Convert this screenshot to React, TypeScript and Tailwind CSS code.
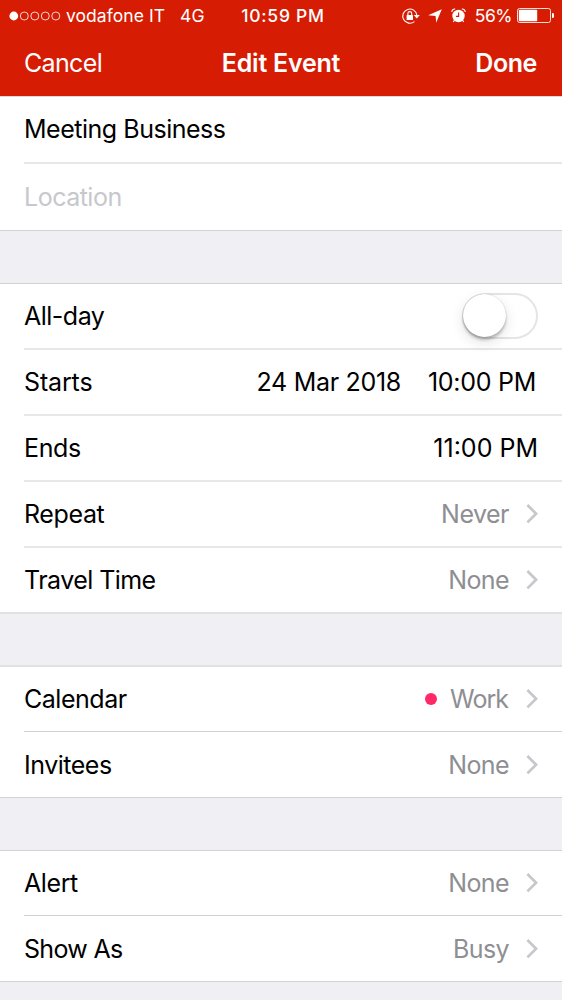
import type { ReactNode } from "react";

function Chevron() {
  return (
    <svg className="ml-[17px] h-5 w-3 shrink-0" viewBox="0 0 12 20" fill="none" stroke="#c7c7cc" strokeWidth="2.7">
      <path d="M1.4 1 10.1 9.7 1.4 18.4" />
    </svg>
  );
}

function Row({
  label,
  labelClass,
  height = "h-[66px]",
  line = "border-b-2 border-[#e7e7e9]",
  children,
}: {
  label: string;
  labelClass: string;
  height?: string;
  line?: string;
  children?: ReactNode;
}) {
  return (
    <div className={`flex pl-6 ${height}`}>
      <div className={`flex flex-1 items-center justify-between pr-6 ${line}`}>
        <span className={labelClass}>{label}</span>
        <div className="flex items-center">{children}</div>
      </div>
    </div>
  );
}

function StatusBar() {
  return (
    <div className="grid h-[31px] grid-cols-[1fr_auto_1fr] items-center text-[17.5px] leading-none">
      <div className="flex items-center pl-[9px]">
        <svg className="h-[10px] w-[52px]" viewBox="0 0 52 10" fill="none" stroke="#fff" strokeWidth="0.8">
          <circle cx="4.8" cy="5" r="4.4" fill="#fff" stroke="none" />
          <circle cx="15.3" cy="5" r="4" />
          <circle cx="25.8" cy="5" r="4" />
          <circle cx="36.3" cy="5" r="4" />
          <circle cx="46.8" cy="5" r="4" />
        </svg>
        <span className="ml-[5px] tracking-[0.05px]">vodafone IT</span>
        <span className="ml-[15px] tracking-[0.2px]">4G</span>
      </div>
      <span className="pl-1 font-medium tracking-[0.75px]">10:59 PM</span>
      <div className="flex items-center justify-end pr-2">
        <svg className="h-[18px] w-[20px]" viewBox="0 0 20 18" fill="none">
          <path d="M15.9 8.2A7.1 7.1 0 1 0 13.4 14.6" stroke="#fff" strokeWidth="1.1" />
          <path d="M12.8 8h6l-3 3.6z" fill="#fff" />
          <rect x="5.6" y="8" width="6.4" height="5.1" rx="0.5" fill="#fff" />
          <path d="M6.9 8V6.5a1.9 1.9 0 0 1 3.8 0V8" stroke="#fff" strokeWidth="1.1" />
        </svg>
        <svg className="ml-[7px] h-[14px] w-[14px]" viewBox="0 0 14 14" fill="#fff">
          <path d="M13.8.2 8.2 13.8 7.6 6.9.2 6.3z" />
        </svg>
        <svg className="ml-[9px] h-[15px] w-[15px]" viewBox="0 0 15 15" fill="none">
          <circle cx="7.5" cy="8" r="6.2" fill="#fff" />
          <path d="M.8 4A3 3 0 0 1 4.2 1M14.2 4A3 3 0 0 0 10.8 1" stroke="#fff" strokeWidth="1.1" />
          <path d="m3.6 12-1.3 1.8M11.4 12l1.3 1.8" stroke="#fff" strokeWidth="1.2" />
          <path d="M7.6 4.4v4H4.9" stroke="#d61d04" strokeWidth="1.1" />
        </svg>
        <span className="ml-[9px] tracking-[-0.5px]">56%</span>
        <svg className="ml-[5px] h-[15px] w-[37px]" viewBox="0 0 37 15" fill="none">
          <rect x="0.5" y="0.5" width="33" height="14" rx="2" stroke="#fff" strokeOpacity="0.85" />
          <rect x="1.8" y="1.8" width="18.4" height="11.4" rx="0.8" fill="#fff" />
          <path d="M35 5a2.5 2.5 0 0 1 0 5z" fill="#fff" />
        </svg>
      </div>
    </div>
  );
}

const crisp = "border-b border-[#d2d2d5]";

export default function App() {
  return (
    <div className="h-[1000px] w-[562px] overflow-hidden bg-[#efeff4] font-['Inter',sans-serif] text-[25px] leading-[30px] whitespace-nowrap text-black">
      <header className="h-24 bg-[#d61d04] text-white">
        <StatusBar />
        <div className="grid h-16 grid-cols-[1fr_auto_1fr] items-center px-6">
          <span className="tracking-[-0.66px]">Cancel</span>
          <span className="font-semibold tracking-[-0.22px]">Edit Event</span>
          <span className="pr-px text-right font-semibold tracking-[-0.42px]">Done</span>
        </div>
      </header>

      <section className="border-t border-[#d9d9da] bg-white">
        <Row label="Meeting Business" labelClass="pb-0.5 tracking-[-0.48px]" height="h-[67px]" />
        <div className="border-b border-[#d2d2d5]">
          <Row label="Location" labelClass="tracking-[-0.5px] text-[#c7c7cd]" line="" />
        </div>
      </section>

      <section className="mt-[52px] border-t border-b-2 border-t-[#d2d2d5] border-b-[#e0e0e3] bg-white">
        <Row label="All-day" labelClass="tracking-[-0.5px]">
          <div className="h-[46px] w-[76px] rounded-full border-[2.5px] border-[#e5e5e5]">
            <div className="-mt-px -ml-px h-[43px] w-[43px] rounded-full bg-white shadow-[0_3px_3px_rgba(0,0,0,0.22),0_5px_14px_rgba(0,0,0,0.12),0_0_1px_rgba(0,0,0,0.25)]" />
          </div>
        </Row>
        <Row label="Starts" labelClass="tracking-[-0.14px]">
          <span className="mr-[27px] tracking-[-0.3px]">24 Mar 2018</span>
          <span className="pr-0.5 tracking-[-0.28px]">10:00 PM</span>
        </Row>
        <Row label="Ends" labelClass="tracking-[-0.4px]">
          <span className="tracking-[0px]">11:00 PM</span>
        </Row>
        <Row label="Repeat" labelClass="tracking-[-0.37px]">
          <span className="tracking-[-0.51px] text-[#8e8e93]">Never</span>
          <Chevron />
        </Row>
        <Row label="Travel Time" labelClass="tracking-[-0.55px]" height="h-16" line="">
          <span className="tracking-[-0.6px] text-[#8e8e93]">None</span>
          <Chevron />
        </Row>
      </section>

      <section className="mt-[51px] border-t-2 border-b border-t-[#e0e0e3] border-b-[#d2d2d5] bg-white">
        <Row label="Calendar" labelClass="tracking-[-0.48px]" height="h-[65px]" line={crisp}>
          <span className="mr-[13px] h-3 w-3 rounded-full bg-[#ff2968]" />
          <span className="pr-px tracking-[-1px] text-[#8e8e93]">Work</span>
          <Chevron />
        </Row>
        <Row label="Invitees" labelClass="tracking-[-0.48px]" height="h-[65px]" line="">
          <span className="tracking-[-0.6px] text-[#8e8e93]">None</span>
          <Chevron />
        </Row>
      </section>

      <section className="mt-[52px] border-y border-[#d2d2d5] bg-white">
        <Row label="Alert" labelClass="tracking-[-0.4px]" height="h-[65px]" line={crisp}>
          <span className="tracking-[-0.6px] text-[#8e8e93]">None</span>
          <Chevron />
        </Row>
        <Row label="Show As" labelClass="tracking-[-0.68px]" height="h-[65px]" line="">
          <span className="tracking-[-0.61px] text-[#8e8e93]">Busy</span>
          <Chevron />
        </Row>
      </section>
    </div>
  );
}
